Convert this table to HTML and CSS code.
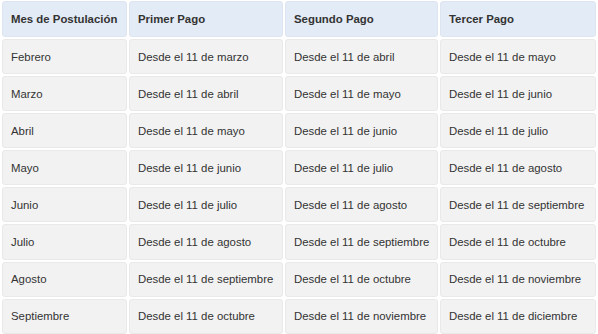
FILE: index.html
```html
<!DOCTYPE html>
<html lang="es">
<head>
<meta charset="utf-8">
<title>Calendario de pagos</title>
<link rel="stylesheet" href="styles.css">
</head>
<body>
<div class="table">
  <div class="cell head">Mes de Postulación</div>
  <div class="cell head">Primer Pago</div>
  <div class="cell head">Segundo Pago</div>
  <div class="cell head">Tercer Pago</div>

  <div class="cell">Febrero</div>
  <div class="cell">Desde el 11 de marzo</div>
  <div class="cell">Desde el 11 de abril</div>
  <div class="cell">Desde el 11 de mayo</div>

  <div class="cell">Marzo</div>
  <div class="cell">Desde el 11 de abril</div>
  <div class="cell">Desde el 11 de mayo</div>
  <div class="cell">Desde el 11 de junio</div>

  <div class="cell">Abril</div>
  <div class="cell">Desde el 11 de mayo</div>
  <div class="cell">Desde el 11 de junio</div>
  <div class="cell">Desde el 11 de julio</div>

  <div class="cell">Mayo</div>
  <div class="cell">Desde el 11 de junio</div>
  <div class="cell">Desde el 11 de julio</div>
  <div class="cell">Desde el 11 de agosto</div>

  <div class="cell">Junio</div>
  <div class="cell">Desde el 11 de julio</div>
  <div class="cell">Desde el 11 de agosto</div>
  <div class="cell">Desde el 11 de septiembre</div>

  <div class="cell">Julio</div>
  <div class="cell">Desde el 11 de agosto</div>
  <div class="cell">Desde el 11 de septiembre</div>
  <div class="cell">Desde el 11 de octubre</div>

  <div class="cell">Agosto</div>
  <div class="cell">Desde el 11 de septiembre</div>
  <div class="cell">Desde el 11 de octubre</div>
  <div class="cell">Desde el 11 de noviembre</div>

  <div class="cell">Septiembre</div>
  <div class="cell">Desde el 11 de octubre</div>
  <div class="cell">Desde el 11 de noviembre</div>
  <div class="cell">Desde el 11 de diciembre</div>
</div>
</body>
</html>
```
FILE: styles.css
```css
html, body {
  margin: 0;
  padding: 0;
  background: #ffffff;
}
body {
  font-family: "Liberation Sans", Arial, sans-serif;
  font-size: 11.4px;
  color: #333333;
}
.table {
  display: grid;
  grid-template-columns: 125px 154px 153px 156px;
  grid-template-rows: 36px;
  grid-auto-rows: 35.1px;
  gap: 2px;
  padding: 1px 2px;
}
.cell {
  display: flex;
  align-items: center;
  padding: 0 8px;
  background: #f2f2f2;
  border: 1px solid #e9e9e9;
  border-radius: 3px;
  white-space: nowrap;
  overflow: hidden;
}
.head {
  background: #e3ebf6;
  border-color: #dde5f0;
  font-weight: bold;
}
```
